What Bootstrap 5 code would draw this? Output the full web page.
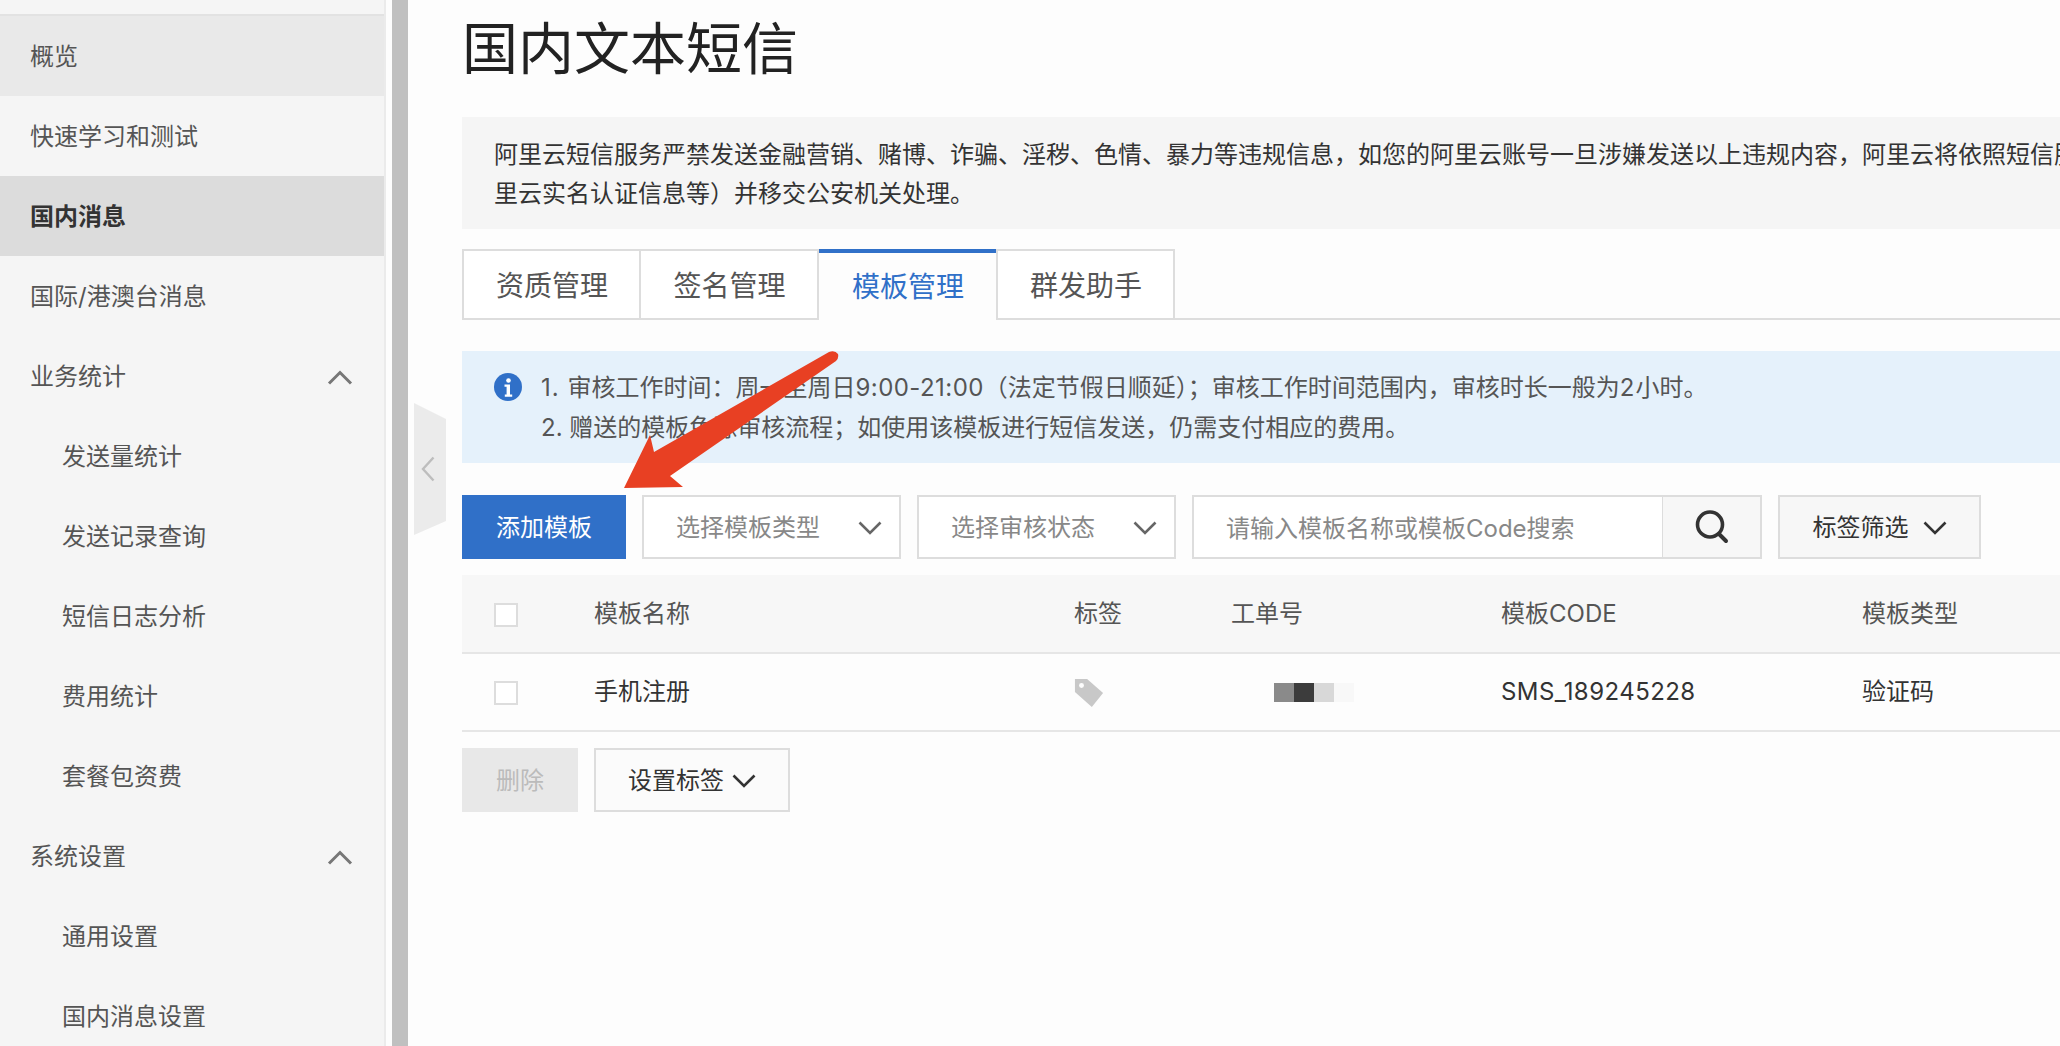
<!DOCTYPE html>
<html lang="zh-CN">
<head>
<meta charset="utf-8">
<title>国内文本短信</title>
<link href="https://cdn.jsdelivr.net/npm/bootstrap@5.3.0/dist/css/bootstrap.min.css" rel="stylesheet">
<style>
html,body{height:1046px;overflow:hidden;}
body{background:#fdfdfd;font-family:"Inter","Noto Sans CJK SC",sans-serif;font-size:24px;color:#333;position:relative;}
.shell{height:1046px;}
.side{width:386px;flex:none;background:#f5f5f5;border-right:2px solid #ebebeb;padding-top:14px;overflow:hidden;}
.side-top{border-top:2px solid #e2e2e2;}
.side-item{height:80px;padding:2px 31px 0 30px;display:flex;align-items:center;justify-content:space-between;color:#555;font-size:24px;text-decoration:none;}
.side-item.sub{padding-left:62px;}
.side-item.soft{background:#e9e9e9;}
.side-item.on{background:#dcdcdc;color:#333;font-weight:700;}
.gutter{width:26px;flex:none;padding-left:6px;padding-right:4px;}
.gutter-bar{background:#c0c0c0;height:100%;}
.pane{flex:1 1 auto;min-width:0;padding-left:50px;overflow:hidden;}
.page-title{font-size:56px;font-weight:400;line-height:98px;margin:0 0 19px;color:#222;}
.note{background:#f5f5f5;height:112px;padding:18px 32px;line-height:39px;white-space:nowrap;overflow:hidden;color:#333;font-size:24px;}
.tabs-line{margin-top:20px;border-bottom:2px solid #ddd;height:71px;}
.tab-a{height:71px;width:178px;border:2px solid #ddd;background:#fff;color:#555;font-size:28px;display:flex;align-items:center;justify-content:center;padding:2px 0 0 1px;text-decoration:none;}
.tab-a+.tab-a{border-left-width:0;}
.tab-a.first{width:179px;}
.tab-a.on{border:0;border-top:4px solid #3070c8;color:#3070c8;background:#fdfdfd;width:177px;margin-bottom:-2px;height:72px;padding:0 0 0 1px;}
.tab-a.on+.tab-a{border-left-width:2px;width:179px;}
.info-box{margin-top:31px;background:#e5f1fb;height:112px;padding:17px 24px 0 32px;color:#555;line-height:40px;white-space:nowrap;gap:19px;}
.wide-num{letter-spacing:.45px;}
.wide-lead{letter-spacing:1px;}
.tools{margin-top:32px;height:64px;gap:16px;}
.b-main{width:164px;height:64px;background:#3070c8;color:#fff;border:0;border-radius:0;font-size:24px;padding:2px 0 0;}
.b-main:hover{background:#3070c8;color:#fff;}
.pick{width:259px;height:64px;border:2px solid #ddd;background:#fff;color:#888;font-size:24px;border-radius:0;display:flex;align-items:center;justify-content:space-between;padding:2px 17px 0 32px;}
.finder{width:570px;height:64px;flex-wrap:nowrap;}
.finder .form-control{height:64px;border:2px solid #ddd;border-right:0;border-radius:0;font-size:24px;padding:2px 32px 0;color:#888;background:#fff;box-shadow:none;}
.finder .form-control::placeholder{color:#888;opacity:1;}
.finder .b-find{width:100px;flex:none;height:64px;border:2px solid #ddd;border-left:1px solid #ddd;border-radius:0;background:#f7f7f7;padding:0;margin:0;display:flex;align-items:center;justify-content:center;}
.b-tag{width:203px;height:64px;border:2px solid #ddd;border-radius:0;background:#f7f7f7;color:#333;font-size:24px;display:flex;align-items:center;justify-content:center;gap:14px;padding:2px 0 0;}
.grid-wrap{margin-top:16px;}
.tpl{table-layout:fixed;width:1598px;margin:0;--bs-table-bg:transparent;}
.tpl th,.tpl td{height:78px;padding:0;vertical-align:middle;font-weight:400;border-bottom:2px solid #e6e6e6;font-size:24px;}
.tpl th{background:#f7f7f7;color:#555;}
.tpl td{color:#333;}
.tick{width:24px;height:24px;border:2px solid #ddd;background:#fff;display:block;margin:2px 0 0 32px;}
.mosaic{height:19px;margin-left:43px;width:80px;}
.mosaic i{display:block;width:20px;height:100%;}
.foot{margin-top:16px;gap:16px;}
.b-off{width:116px;height:64px;background:#e8e8e8;color:#bbb;border:0;border-radius:0;font-size:24px;padding:2px 0 0;}
.b-set{width:196px;height:64px;border:2px solid #ddd;border-radius:0;background:#fbfbfb;color:#333;font-size:24px;display:flex;align-items:center;justify-content:center;gap:8px;padding:2px 0 0;}
.fold{position:absolute;left:414px;top:403px;width:32px;height:132px;background:#ebebeb;clip-path:polygon(0 0,100% 16px,100% 118px,0 100%);display:flex;align-items:center;justify-content:center;padding-right:4px;}
.red-arrow{position:absolute;left:0;top:0;width:2060px;height:1046px;pointer-events:none;}
</style>
</head>
<body>
<div class="shell d-flex">
  <nav class="side">
    <div class="side-top">
      <a class="side-item soft" href="#">概览</a>
      <a class="side-item" href="#">快速学习和测试</a>
      <a class="side-item on" href="#">国内消息</a>
      <a class="side-item" href="#">国际/港澳台消息</a>
      <a class="side-item" href="#">业务统计<svg width="26" height="15" viewBox="0 0 26 15"><path d="M2 13.500 13 2.500l11 11" fill="none" stroke="#777" stroke-width="3"/></svg></a>
      <a class="side-item sub" href="#">发送量统计</a>
      <a class="side-item sub" href="#">发送记录查询</a>
      <a class="side-item sub" href="#">短信日志分析</a>
      <a class="side-item sub" href="#">费用统计</a>
      <a class="side-item sub" href="#">套餐包资费</a>
      <a class="side-item" href="#">系统设置<svg width="26" height="15" viewBox="0 0 26 15"><path d="M2 13.500 13 2.500l11 11" fill="none" stroke="#777" stroke-width="3"/></svg></a>
      <a class="side-item sub" href="#">通用设置</a>
      <a class="side-item sub" href="#">国内消息设置</a>
    </div>
  </nav>
  <div class="gutter"><div class="gutter-bar"></div></div>
  <main class="pane">
    <h1 class="page-title">国内文本短信</h1>
    <div class="note">阿里云短信服务严禁发送金融营销、赌博、诈骗、淫秽、色情、暴力等违规信息，如您的阿里云账号一旦涉嫌发送以上违规内容，阿里云将依照短信服务<br>里云实名认证信息等）并移交公安机关处理。</div>
    <div class="nav tabs-line d-flex">
      <a class="tab-a first" href="#">资质管理</a>
      <a class="tab-a" href="#">签名管理</a>
      <a class="tab-a on" href="#">模板管理</a>
      <a class="tab-a" href="#">群发助手</a>
    </div>
    <div class="info-box d-flex">
      <svg width="28" height="28" viewBox="0 0 28 28" style="margin-top:5px;flex:none"><circle cx="14" cy="14" r="14" fill="#3070c8"/><circle cx="14.500" cy="7.500" r="2.300" fill="#fff"/><path d="M10.500 11.500h5.500v10h2.200v2.200h-7.400v-2.200h1.800v-7.800h-2.100z" fill="#fff"/></svg>
      <div><span class="wide-lead">1. </span>审核工作时间：周一至周日<span class="wide-num">9:00-21:00</span>（法定节假日顺延）；审核工作时间范围内，审核时长一般为<span class="wide-lead">2</span>小时。<br>2. 赠送的模板免除审核流程；如使用该模板进行短信发送，仍需支付相应的费用。</div>
    </div>
    <div class="tools d-flex">
      <button class="btn b-main" type="button">添加模板</button>
      <div class="pick">选择模板类型<svg width="24" height="14" viewBox="0 0 24 14"><path d="M1.500 1.500 12 12 22.500 1.500" fill="none" stroke="#666" stroke-width="2.600"/></svg></div>
      <div class="pick">选择审核状态<svg width="24" height="14" viewBox="0 0 24 14"><path d="M1.500 1.500 12 12 22.500 1.500" fill="none" stroke="#666" stroke-width="2.600"/></svg></div>
      <div class="input-group finder">
        <input class="form-control" type="text" placeholder="请输入模板名称或模板Code搜索">
        <button class="btn b-find" type="button"><svg width="36" height="36" viewBox="0 0 36 36"><circle cx="16" cy="15.500" r="12.500" fill="none" stroke="#333" stroke-width="3.600"/><path d="M25 25 32 32" stroke="#333" stroke-width="4" stroke-linecap="round"/></svg></button>
      </div>
      <button class="btn b-tag" type="button">标签筛选<svg width="24" height="14" viewBox="0 0 24 14"><path d="M1.500 1.500 12 12 22.500 1.500" fill="none" stroke="#333" stroke-width="2.600"/></svg></button>
    </div>
    <div class="grid-wrap">
      <table class="table tpl">
        <colgroup><col style="width:132px"><col style="width:480px"><col style="width:157px"><col style="width:270px"><col style="width:361px"><col style="width:198px"></colgroup>
        <thead><tr><th><span class="tick"></span></th><th>模板名称</th><th>标签</th><th>工单号</th><th>模板CODE</th><th>模板类型</th></tr></thead>
        <tbody><tr>
          <td><span class="tick"></span></td>
          <td>手机注册</td>
          <td><svg width="30" height="30" viewBox="0 0 32 32"><path d="M1 1h13l17 15-12 15L1 15z" fill="#c8c8c8"/><circle cx="8" cy="8" r="2.600" fill="#fdfdfd"/></svg></td>
          <td><div class="mosaic d-flex"><i style="background:#8a8a8a"></i><i style="background:#3c3c3c"></i><i style="background:#d8d8d8"></i><i style="background:#f8f8f8"></i></div></td>
          <td class="wide-num">SMS_189245228</td>
          <td>验证码</td>
        </tr></tbody>
      </table>
    </div>
    <div class="foot d-flex">
      <button class="btn b-off" type="button">删除</button>
      <button class="btn b-set" type="button">设置标签<svg width="24" height="14" viewBox="0 0 24 14"><path d="M1.500 1.500 12 12 22.500 1.500" fill="none" stroke="#333" stroke-width="2.600"/></svg></button>
    </div>
  </main>
</div>
<div class="fold"><svg width="14" height="26" viewBox="0 0 14 26"><path d="M12.500 1.500 2 13l10.500 11.500" fill="none" stroke="#bdbdbd" stroke-width="2.400"/></svg></div>
<svg class="red-arrow" viewBox="0 0 2060 1046"><path d="M624 488 650 435 654 452 829 352Q835 350 838 354 839 358 836 361L670 476 683 487Z" fill="#e84023"/></svg>
</body>
</html>
